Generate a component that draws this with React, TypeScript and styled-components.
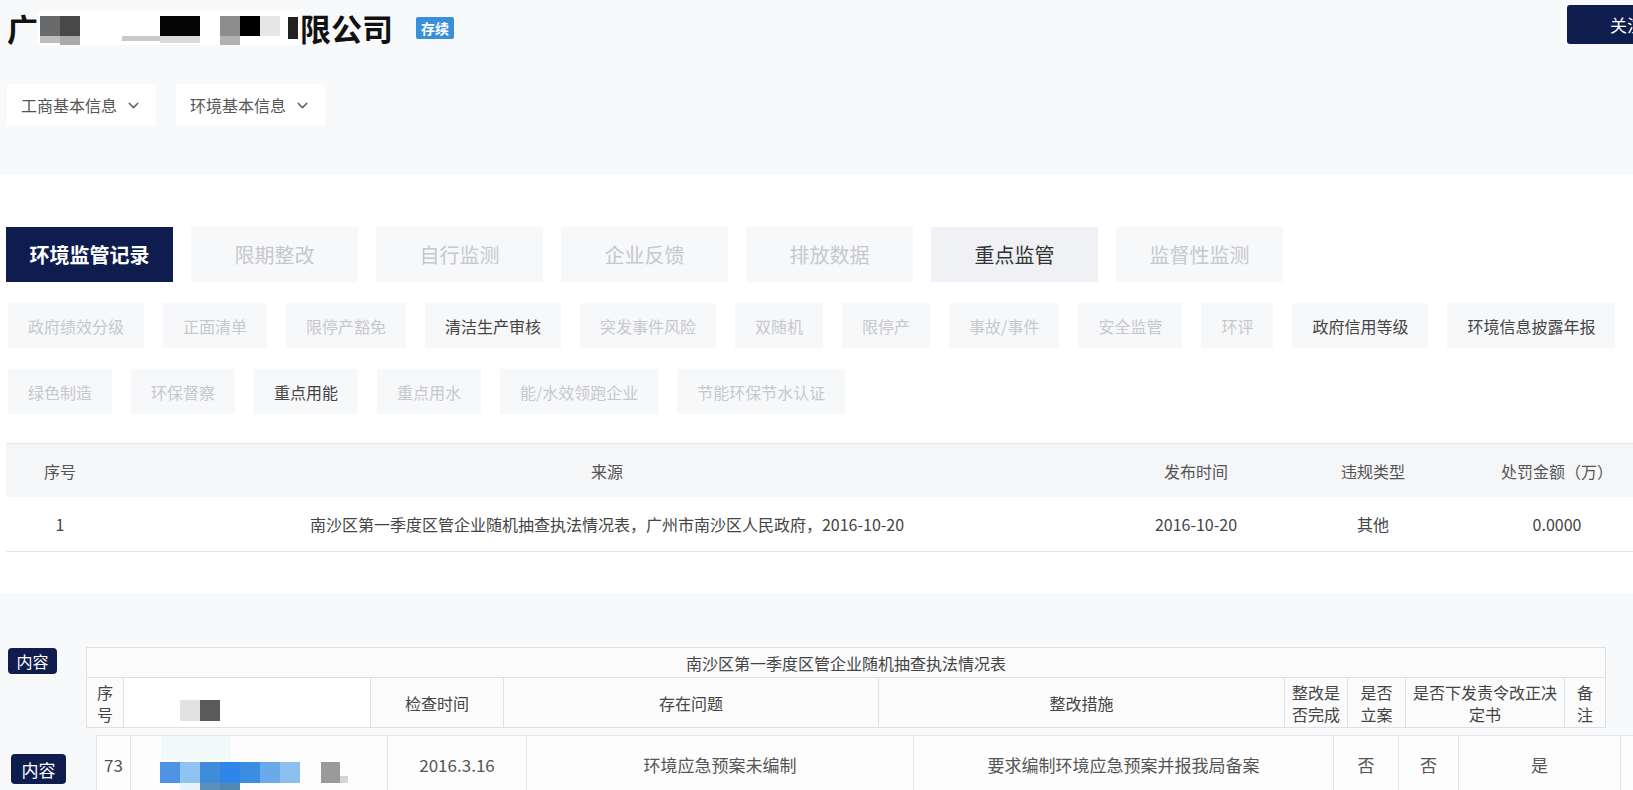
import React from 'react';
import styled, { createGlobalStyle } from 'styled-components';
import { ChevronDown } from 'lucide-react';

const navy = '#0e1d4d';
const pageGray = '#f8f9fb';

const GlobalStyle = createGlobalStyle`
  html, body {
    margin: 0;
    padding: 0;
  }
  body {
    width: 1633px;
    height: 790px;
    overflow: hidden;
    background: ${pageGray};
    font-family: "Noto Sans CJK SC", "Noto Sans", sans-serif;
    color: #333;
  }
`;

const Page = styled.div`
  width: 1690px;
`;

/* ---------- top: company name + dropdowns ---------- */

const TopSection = styled.section`
  height: 175px;
  box-sizing: border-box;
  padding: 5px 3px 0 7px;
  background: ${pageGray};
`;

const TitleRow = styled.div`
  display: flex;
  justify-content: space-between;
  align-items: flex-start;
`;

const TitleGroup = styled.div`
  display: flex;
  align-items: center;
  padding-top: 6px;
`;

const CompanyName = styled.h1`
  display: flex;
  align-items: center;
  margin: 0;
  font-size: 31px;
  line-height: 34px;
  font-weight: 700;
  color: #111;
`;

const StatusTag = styled.span`
  margin-left: 23px;
  height: 22px;
  padding: 0 5px;
  line-height: 22px;
  font-size: 14px;
  font-weight: 700;
  color: #fff;
  background: #3a8fdb;
  border-radius: 2px;
`;

const FollowButton = styled.button`
  width: 120px;
  height: 39px;
  border: 0;
  border-radius: 3px;
  background: ${navy};
  color: #fff;
  font-family: inherit;
  font-size: 17px;
`;

const DropdownRow = styled.div`
  display: flex;
  gap: 20px;
  margin-top: 39px;
`;

const Dropdown = styled.div`
  display: flex;
  align-items: center;
  gap: 8px;
  height: 42px;
  padding: 0 14px;
  background: #fff;
  font-size: 16px;
  color: #555;
  svg {
    color: #666;
  }
`;

/* ---------- tabs + first table ---------- */

const WhiteSection = styled.section`
  background: #fff;
  padding: 52px 0 41px 6px;
`;

const TabRows = styled.div`
  display: flex;
  flex-direction: column;
  gap: 21px;
`;

const BigTabs = styled.div`
  display: flex;
  gap: 18px;
`;

type TabState = 'current' | 'on' | 'off';

const BigTab = styled.div<{ $state: TabState }>`
  width: 167px;
  height: 55px;
  display: flex;
  align-items: center;
  justify-content: center;
  font-size: 20px;
  font-weight: ${({ $state }) => ($state === 'current' ? 700 : 400)};
  color: ${({ $state }) =>
    $state === 'current' ? '#fff' : $state === 'on' ? '#333' : '#c6c8cc'};
  background: ${({ $state }) =>
    $state === 'current' ? navy : $state === 'on' ? '#eff1f4' : '#f7f8fa'};
`;

const SmallTabs = styled.div`
  display: flex;
  gap: 19px;
  padding-left: 2px;
`;

const SmallTab = styled.div<{ $on?: boolean }>`
  height: 45px;
  padding: 0 20px;
  display: flex;
  align-items: center;
  font-size: 16px;
  white-space: nowrap;
  color: ${({ $on }) => ($on ? '#444' : '#c6c8cc')};
  background: #f7f8fa;
`;

const RecordTable = styled.table`
  width: 1654px;
  margin-top: 29px;
  border-collapse: collapse;
  table-layout: fixed;
  font-size: 16px;

  th {
    height: 51px;
    font-weight: 400;
    color: #555;
    background: #f5f6f8;
    border-top: 1px solid #e4e5e8;
  }
  td {
    height: 52px;
    text-align: center;
    color: #444;
    border-bottom: 1px solid #e4e5e8;
  }
`;

/* ---------- content section ---------- */

const LowerSection = styled.section`
  background: ${pageGray};
  padding-top: 54px;
`;

const ContentRow = styled.div<{ $indent: number; $gap: number; $top?: number }>`
  display: flex;
  align-items: flex-start;
  gap: ${({ $gap }) => $gap}px;
  padding-left: ${({ $indent }) => $indent}px;
  margin-top: ${({ $top = 0 }) => $top}px;
`;

const ContentBadge = styled.div<{ $large?: boolean; $offset: number }>`
  flex: none;
  width: ${({ $large }) => ($large ? 55 : 49)}px;
  height: ${({ $large }) => ($large ? 30 : 26)}px;
  margin-top: ${({ $offset }) => $offset}px;
  display: flex;
  align-items: center;
  justify-content: center;
  border-radius: 4px;
  background: ${navy};
  color: #fff;
  font-size: ${({ $large }) => ($large ? 17 : 16)}px;
`;

const SheetHead = styled.table`
  width: 1519px;
  border-collapse: collapse;
  table-layout: fixed;
  background: #fbfbfc;
  font-size: 16px;
  color: #444;

  th {
    font-weight: 400;
    line-height: 22px;
    padding: 0;
    border: 1px solid #dfe0e3;
  }
`;

const SheetCaption = styled.th`
  height: 29px;
`;

const SheetHeadCell = styled.th`
  height: 49px;
`;

const MaskCell = styled.th`
  background: #fff;
  vertical-align: top;
  svg {
    display: block;
  }
`;

const SheetRow = styled.table`
  width: 1584px;
  border-collapse: collapse;
  table-layout: fixed;
  background: #fdfdfd;
  font-size: 17px;
  color: #555;

  td {
    height: 57px;
    padding: 0;
    text-align: center;
    border: 1px solid #e3e4e7;
    border-bottom: 0;
  }
`;

const RowMaskCell = styled.td`
  vertical-align: top;
  svg {
    display: block;
  }
`;

/* ---------- pixelated mask drawings ---------- */

type Block = [number, number, number, number, string];

function Mosaic(props: { width: number; height: number; blocks: Block[] }) {
  return (
    <svg width={props.width} height={props.height} viewBox={`0 0 ${props.width} ${props.height}`}>
      {props.blocks.map(([x, y, w, h, c], i) => (
        <rect key={i} x={x} y={y} width={w} height={h} fill={c} />
      ))}
    </svg>
  );
}

const nameBlocks: Block[] = [
  [0, 0, 262, 34, '#ffffff'],
  [2, 5, 20, 20, '#6a6a6a'],
  [22, 5, 20, 20, '#484848'],
  [2, 25, 20, 7, '#bdbdbd'],
  [22, 25, 20, 9, '#a9a9a9'],
  [84, 25, 38, 5, '#c9c9c9'],
  [122, 5, 40, 20, '#050505'],
  [122, 25, 40, 7, '#dadada'],
  [182, 5, 20, 20, '#8d8d8d'],
  [182, 25, 20, 9, '#b1b1b1'],
  [202, 5, 20, 20, '#000000'],
  [222, 5, 20, 20, '#e7e7e7'],
  [250, 6, 10, 22, '#222222'],
];

const headMaskBlocks: Block[] = [
  [56, 22, 20, 21, '#e2e2e2'],
  [76, 22, 20, 21, '#5a5a5a'],
];

const rowMaskBlocks: Block[] = [
  [30, 0, 70, 24, '#f1fafb'],
  [29, 26, 20, 21, '#4f93e6'],
  [49, 26, 20, 21, '#8fc3f2'],
  [69, 26, 20, 21, '#3f8cd9'],
  [89, 26, 20, 21, '#2e86ea'],
  [109, 26, 20, 21, '#3b8de0'],
  [129, 26, 20, 21, '#6aa9ea'],
  [149, 26, 20, 21, '#8cbff0'],
  [69, 47, 20, 11, '#5b90b8'],
  [89, 47, 20, 11, '#4f88b0'],
  [49, 47, 20, 11, '#e8f2fb'],
  [190, 26, 19, 21, '#9a9a9a'],
  [209, 40, 8, 7, '#d5d5d5'],
];

/* ---------- data ---------- */

const bigTabs: { label: string; state: TabState }[] = [
  { label: '环境监管记录', state: 'current' },
  { label: '限期整改', state: 'off' },
  { label: '自行监测', state: 'off' },
  { label: '企业反馈', state: 'off' },
  { label: '排放数据', state: 'off' },
  { label: '重点监管', state: 'on' },
  { label: '监督性监测', state: 'off' },
];

const smallTabRows: { label: string; on?: boolean }[][] = [
  [
    { label: '政府绩效分级' },
    { label: '正面清单' },
    { label: '限停产豁免' },
    { label: '清洁生产审核', on: true },
    { label: '突发事件风险' },
    { label: '双随机' },
    { label: '限停产' },
    { label: '事故/事件' },
    { label: '安全监管' },
    { label: '环评' },
    { label: '政府信用等级', on: true },
    { label: '环境信息披露年报', on: true },
  ],
  [
    { label: '绿色制造' },
    { label: '环保督察' },
    { label: '重点用能', on: true },
    { label: '重点用水' },
    { label: '能/水效领跑企业' },
    { label: '节能环保节水认证' },
  ],
];

const headCols = [37, 247, 133, 375, 406, 63, 58, 159, 41];
const rowCols = [34, 257, 139, 387, 420, 65, 60, 162, 60];

export default function App() {
  return (
    <Page>
      <GlobalStyle />

      <TopSection>
        <TitleRow>
          <TitleGroup>
            <CompanyName>
              广
              <Mosaic width={262} height={34} blocks={nameBlocks} />
              限公司
            </CompanyName>
            <StatusTag>存续</StatusTag>
          </TitleGroup>
          <FollowButton>关注</FollowButton>
        </TitleRow>

        <DropdownRow>
          <Dropdown>
            工商基本信息 <ChevronDown size={17} strokeWidth={2} />
          </Dropdown>
          <Dropdown>
            环境基本信息 <ChevronDown size={17} strokeWidth={2} />
          </Dropdown>
        </DropdownRow>
      </TopSection>

      <WhiteSection>
        <TabRows>
          <BigTabs>
            {bigTabs.map((t) => (
              <BigTab key={t.label} $state={t.state}>
                {t.label}
              </BigTab>
            ))}
          </BigTabs>
          {smallTabRows.map((row, i) => (
            <SmallTabs key={i}>
              {row.map((t) => (
                <SmallTab key={t.label} $on={t.on}>
                  {t.label}
                </SmallTab>
              ))}
            </SmallTabs>
          ))}
        </TabRows>

        <RecordTable>
          <colgroup>
            <col style={{ width: 108 }} />
            <col style={{ width: 986 }} />
            <col style={{ width: 192 }} />
            <col style={{ width: 162 }} />
            <col style={{ width: 206 }} />
          </colgroup>
          <thead>
            <tr>
              <th>序号</th>
              <th>来源</th>
              <th>发布时间</th>
              <th>违规类型</th>
              <th>处罚金额（万）</th>
            </tr>
          </thead>
          <tbody>
            <tr>
              <td>1</td>
              <td>南沙区第一季度区管企业随机抽查执法情况表，广州市南沙区人民政府，2016-10-20</td>
              <td>2016-10-20</td>
              <td>其他</td>
              <td>0.0000</td>
            </tr>
          </tbody>
        </RecordTable>
      </WhiteSection>

      <LowerSection>
        <ContentRow $indent={8} $gap={29}>
          <ContentBadge $offset={1}>内容</ContentBadge>
          <SheetHead>
            <colgroup>
              {headCols.map((w, i) => (
                <col key={i} style={{ width: w }} />
              ))}
            </colgroup>
            <thead>
              <tr>
                <SheetCaption colSpan={9}>南沙区第一季度区管企业随机抽查执法情况表</SheetCaption>
              </tr>
              <tr>
                <SheetHeadCell>
                  序<br />号
                </SheetHeadCell>
                <MaskCell>
                  <Mosaic width={247} height={49} blocks={headMaskBlocks} />
                </MaskCell>
                <SheetHeadCell>检查时间</SheetHeadCell>
                <SheetHeadCell>存在问题</SheetHeadCell>
                <SheetHeadCell>整改措施</SheetHeadCell>
                <SheetHeadCell>
                  整改是<br />否完成
                </SheetHeadCell>
                <SheetHeadCell>
                  是否<br />立案
                </SheetHeadCell>
                <SheetHeadCell>
                  是否下发责令改正决<br />定书
                </SheetHeadCell>
                <SheetHeadCell>
                  备<br />注
                </SheetHeadCell>
              </tr>
            </thead>
          </SheetHead>
        </ContentRow>

        <ContentRow $indent={11} $gap={30} $top={7}>
          <ContentBadge $large $offset={19}>
            内容
          </ContentBadge>
          <SheetRow>
            <colgroup>
              {rowCols.map((w, i) => (
                <col key={i} style={{ width: w }} />
              ))}
            </colgroup>
            <tbody>
              <tr>
                <td>73</td>
                <RowMaskCell>
                  <Mosaic width={257} height={57} blocks={rowMaskBlocks} />
                </RowMaskCell>
                <td>2016.3.16</td>
                <td>环境应急预案未编制</td>
                <td>要求编制环境应急预案并报我局备案</td>
                <td>否</td>
                <td>否</td>
                <td>是</td>
                <td></td>
              </tr>
            </tbody>
          </SheetRow>
        </ContentRow>
      </LowerSection>
    </Page>
  );
}
